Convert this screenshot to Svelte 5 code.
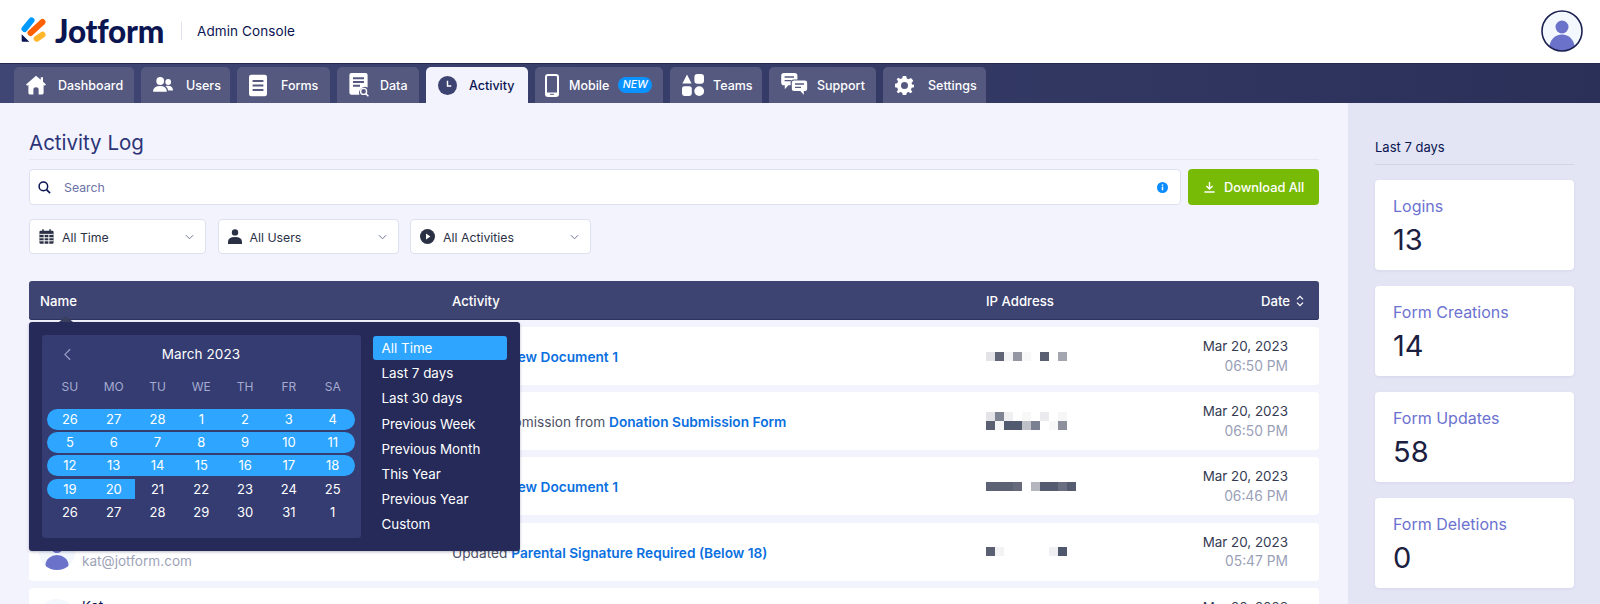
<script>
  const tabs = [
    { id: 'home', label: 'Dashboard' },
    { id: 'users', label: 'Users' },
    { id: 'forms', label: 'Forms' },
    { id: 'data', label: 'Data' },
    { id: 'activity', label: 'Activity', active: true },
    { id: 'mobile', label: 'Mobile', badge: 'NEW' },
    { id: 'teams', label: 'Teams' },
    { id: 'support', label: 'Support' },
    { id: 'settings', label: 'Settings' }
  ];
  const L = '#f3f3f6';
  const W = '#ffffff';
  const D = '#5a6072';
  const ipRows = [
    [['#e4e4e8', '#5f6577', '#f3f3f5', '#9496a2', '#f8f8f9', W, '#5a6072', W, '#a4a6b0']],
    [
      ['#e4e4e8', '#7f8494', '#f0f0f2', W, '#f8f8f9', W, '#ebebed', W, '#f6f6f7'],
      [D, '#f6f6f7', '#525a70', '#525a70', '#bfc1c8', '#7a8092', W, '#f8f8f9', '#8c8f9c']
    ],
    [['#5d6275', '#5d6275', '#5d6275', '#666a7a', W, '#b5b6be', '#565c70', '#565c70', '#6a6e80', '#565c70']],
    [[D, L, W, W, W, W, W, '#f0f0f2', '#50586e']]
  ];
  const rows = [
    { email: 'kat@jotform.com', name: 'Kat', pre: 'Created ', link: 'New Document 1', date: 'Mar 20, 2023', time: '06:50 PM', ip: ipRows[0] },
    { email: 'kat@jotform.com', name: 'Kat', pre: 'Edited Submission from ', link: 'Donation Submission Form', date: 'Mar 20, 2023', time: '06:50 PM', ip: ipRows[1] },
    { email: 'kat@jotform.com', name: 'Kat', pre: 'Created ', link: 'New Document 1', date: 'Mar 20, 2023', time: '06:46 PM', ip: ipRows[2] },
    { email: 'kat@jotform.com', name: 'Kat', pre: 'Updated ', link: 'Parental Signature Required (Below 18)', date: 'Mar 20, 2023', time: '05:47 PM', ip: ipRows[3] },
    { email: 'kat@jotform.com', name: 'Kat', pre: 'Updated ', link: 'Parental Signature', date: 'Mar 20, 2023', time: '05:40 PM', ip: [] }
  ];
  const weekdays = ['SU', 'MO', 'TU', 'WE', 'TH', 'FR', 'SA'];
  const weeks = [
    { days: [26, 27, 28, 1, 2, 3, 4], hl: 'full' },
    { days: [5, 6, 7, 8, 9, 10, 11], hl: 'full' },
    { days: [12, 13, 14, 15, 16, 17, 18], hl: 'full' },
    { days: [19, 20, 21, 22, 23, 24, 25], hl: 'part' },
    { days: [26, 27, 28, 29, 30, 31, 1], hl: 'none' }
  ];
  const presets = ['All Time', 'Last 7 days', 'Last 30 days', 'Previous Week', 'Previous Month', 'This Year', 'Previous Year', 'Custom'];
  const stats = [
    { label: 'Logins', value: '13' },
    { label: 'Form Creations', value: '14' },
    { label: 'Form Updates', value: '58' },
    { label: 'Form Deletions', value: '0' }
  ];
</script>

<div class="page">
  <header class="top">
    <svg class="logo" viewBox="0 0 25 25" width="25" height="25" aria-hidden="true">
      <path d="M3.5 12 L10.5 3.4" stroke="#0099ff" stroke-width="6" stroke-linecap="round" fill="none" />
      <path d="M9.5 16 L21.5 5" stroke="#ff6100" stroke-width="6" stroke-linecap="round" fill="none" />
      <path d="M15.7 21.7 L21.5 17.7" stroke="#ffb629" stroke-width="6" stroke-linecap="round" fill="none" />
      <path d="M.7 17.3 V23.7 Q.7 24.7 1.7 24.7 H8.3 Z" fill="#0a1551" />
    </svg>
    <span class="brand">Jotform</span>
    <span class="divider"></span>
    <span class="console">Admin Console</span>
    <span class="spacer"></span>
    <svg class="avatar-top" viewBox="0 0 42 42" width="42" height="42" aria-hidden="true">
      <defs><clipPath id="topclip"><circle cx="21" cy="21" r="20" /></clipPath></defs>
      <circle cx="21" cy="21" r="20" fill="#f3f8ff" />
      <g clip-path="url(#topclip)">
        <circle cx="21" cy="17" r="6.5" fill="#6b72c9" />
        <ellipse cx="21" cy="37" rx="12.5" ry="12.5" fill="#6b72c9" />
      </g>
      <circle cx="21" cy="21" r="20" fill="none" stroke="#1a2050" stroke-width="1.6" />
    </svg>
  </header>

  <nav class="nav">
    {#each tabs as t}
      <div class="tab t-{t.id}" class:active={t.active}>
        <span class="ticon">
          {#if t.id === 'home'}
            <svg viewBox="0 0 20 20" width="20" height="20"><path d="M10 .8 L14.8 4.8 V2.2 H17 V6.7 L20 9.4 L18.8 10.8 L17.6 9.9 V18 Q17.6 19.4 16.2 19.4 H12.6 V14.6 Q12.6 12.2 10 12.2 Q7.4 12.2 7.4 14.6 V19.4 H3.8 Q2.4 19.4 2.4 18 V9.9 L1.2 10.8 L0 9.4 Z" fill="#fff" /></svg>
          {:else if t.id === 'users'}
            <svg viewBox="0 0 20 20" width="20" height="20"><circle cx="7.2" cy="6" r="3.9" fill="#fff" /><path d="M0 16.8 Q0 11 7.2 11 Q13.6 11 13.9 16.8 Z" fill="#fff" /><circle cx="15.2" cy="7" r="2.9" fill="#fff" /><path d="M12.4 10.9 Q20 9.6 20 15.6 H15.2 Q15 12.8 12.4 10.9 Z" fill="#fff" /></svg>
          {:else if t.id === 'forms'}
            <svg viewBox="0 0 20 24" width="18" height="23"><rect x="0" y="0" width="20" height="24" rx="2.6" fill="#fff" /><path d="M4 7 H16 M4 12 H16 M4 17 H16" stroke="#55597f" stroke-width="2.2" /></svg>
          {:else if t.id === 'data'}
            <svg viewBox="0 0 20 24" width="20" height="24"><path d="M2.4 0 H16.6 Q18.6 0 18.6 2 V14.4 A6 6 0 0 0 10.4 21.8 H2.4 Q.4 21.8 .4 19.8 V2 Q.4 0 2.4 0 Z" fill="#fff" /><path d="M4 5.2 H15 M4 9 H15 M4 12.8 H11" stroke="#55597f" stroke-width="1.9" /><circle cx="14.6" cy="18.4" r="3" fill="none" stroke="#fff" stroke-width="1.4" /><path d="M16.8 20.6 L19.4 23.2" stroke="#fff" stroke-width="1.5" /></svg>
          {:else if t.id === 'activity'}
            <svg viewBox="0 0 20 20" width="19" height="19"><circle cx="10" cy="10" r="10" fill="#3e4472" /><path d="M10 5 V10.6 H14" stroke="#fff" stroke-width="1.5" fill="none" /></svg>
          {:else if t.id === 'mobile'}
            <svg viewBox="0 0 14 23" width="14" height="23"><rect x="1" y="1" width="12" height="21" rx="2" fill="#55597f" stroke="#fff" stroke-width="2" /><path d="M1 18.6 H13 V20 Q13 22 11 22 H3 Q1 22 1 20 Z" fill="#fff" /><path d="M5 20.3 H9" stroke="#55597f" stroke-width="1" /></svg>
          {:else if t.id === 'teams'}
            <svg viewBox="0 0 22 22" width="22" height="22"><path d="M5 .4 L9.6 9.4 H.4 Z" fill="#fff" /><rect x="12.4" y="0" width="9.6" height="9.8" rx="3" fill="#fff" /><rect x="0" y="12.2" width="9.8" height="9.8" rx="2.4" fill="#fff" /><circle cx="17.2" cy="17.1" r="4.9" fill="#fff" /></svg>
          {:else if t.id === 'support'}
            <svg viewBox="0 0 27 24" width="27" height="24"><path d="M3 0 H13.6 Q16.4 0 16.4 2.8 V9.4 Q16.4 12.2 13.6 12.2 H7.4 L3.8 16.2 V12.2 H3 Q0.2 12.2 0.2 9.4 V2.8 Q0.2 0 3 0 Z" fill="#fff" /><path d="M3.6 4 H13 M3.6 7.6 H10" stroke="#55597f" stroke-width="1.4" /><path d="M13 7 H24 Q26.8 7 26.8 9.8 V15.8 Q26.8 18.6 24 18.6 H23.4 V23.4 L19 18.6 H13 Q10.2 18.6 10.2 15.8 V9.8 Q10.2 7 13 7 Z" fill="#fff" stroke="#55597f" stroke-width="1.2" /><path d="M14 11 H23 M14 14.4 H20" stroke="#55597f" stroke-width="1.4" /></svg>
          {:else}
            <svg viewBox="0 0 20 20" width="19" height="19"><path fill="#fff" fill-rule="evenodd" d="M8.2 0 H11.8 L12.4 2.7 L14.4 3.5 L16.7 2 L18 3.3 L19.3 5.3 L17.4 7.2 L18 9 L20 9.2 V11.8 L17.6 12.4 L16.8 14.4 L18.2 16.6 L16.4 18.2 L14.2 16.8 L12.4 17.6 L11.8 20 H8.2 L7.6 17.6 L5.6 16.8 L3.4 18.2 L1.8 16.6 L3.2 14.4 L2.4 12.4 L0 11.8 V8.2 L2.4 7.6 L3.2 5.6 L1.8 3.4 L3.4 1.8 L5.6 3.2 L7.6 2.4 Z M10 6.3 A3.7 3.7 0 1 0 10 13.7 A3.7 3.7 0 1 0 10 6.3 Z" /></svg>
          {/if}
        </span>
        <span class="tlabel">{t.label}</span>
        {#if t.badge}<span class="badge">{t.badge}</span>{/if}
      </div>
    {/each}
  </nav>

  <div class="body">
    <main class="main">
      <h1 class="title">Activity Log</h1>
      <div class="searchline">
        <div class="search">
          <svg viewBox="0 0 14 14" width="13" height="13"><circle cx="5.8" cy="5.8" r="4.6" fill="none" stroke="#0a1551" stroke-width="1.6" /><path d="M9.2 9.2 L13 13" stroke="#0a1551" stroke-width="1.8" /></svg>
          <span class="placeholder">Search</span>
          <span class="spacer"></span>
          <svg viewBox="0 0 12 12" width="11" height="11"><circle cx="6" cy="6" r="6" fill="#0a8cff" /><rect x="5.2" y="5" width="1.6" height="4" fill="#fff" /><rect x="5.2" y="2.6" width="1.6" height="1.5" fill="#fff" /></svg>
        </div>
        <button class="download">
          <svg viewBox="0 0 11 11" width="11" height="11"><path d="M5.5 0 V6.6 M2.4 4 L5.5 7 L8.6 4 M.4 10 H10.6" fill="none" stroke="#fff" stroke-width="1.4" /></svg>
          <span>Download All</span>
        </button>
      </div>

      <div class="filters">
        <div class="filter f1">
          <svg viewBox="0 0 14 14" width="15" height="15"><path fill="#2b3145" d="M1.5 1.6 H3 V.3 H4.4 V1.6 H9.6 V.3 H11 V1.6 H12.5 Q13.6 1.6 13.6 2.7 V12.7 Q13.6 13.8 12.5 13.8 H1.5 Q.4 13.8 .4 12.7 V2.7 Q.4 1.6 1.5 1.6 Z" /><path stroke="#fff" stroke-width=".9" d="M.4 5 H13.6 M.4 8.2 H13.6 M.4 11 H13.6 M4.8 5 V14 M9.2 5 V14" /></svg>
          <span>All Time</span><span class="spacer"></span>
          <svg class="chev" viewBox="0 0 10 6" width="9" height="6"><path d="M1 1 L5 5 L9 1" fill="none" stroke="#6b7193" stroke-width="1.1" /></svg>
        </div>
        <div class="filter f2">
          <svg viewBox="0 0 14 15" width="14" height="15"><circle cx="7" cy="3.4" r="3.2" fill="#2b3145" /><path d="M0 15 V13 Q0 8 7 8 Q14 8 14 13 V15 Z" fill="#2b3145" /></svg>
          <span>All Users</span><span class="spacer"></span>
          <svg class="chev" viewBox="0 0 10 6" width="9" height="6"><path d="M1 1 L5 5 L9 1" fill="none" stroke="#6b7193" stroke-width="1.1" /></svg>
        </div>
        <div class="filter f2">
          <svg viewBox="0 0 15 15" width="15" height="15"><circle cx="7.5" cy="7.5" r="7.5" fill="#2b3145" /><path d="M6 4.6 L10.4 7.5 L6 10.4 Z" fill="#fff" /></svg>
          <span>All Activities</span><span class="spacer"></span>
          <svg class="chev" viewBox="0 0 10 6" width="9" height="6"><path d="M1 1 L5 5 L9 1" fill="none" stroke="#6b7193" stroke-width="1.1" /></svg>
        </div>
      </div>

      <div class="thead">
        <span class="c-name">Name</span>
        <span class="c-act">Activity</span>
        <span class="c-ip">IP Address</span>
        <span class="hdate">Date
          <svg viewBox="0 0 8 12" width="8" height="12"><path d="M1 4.4 L4 1.4 L7 4.4 M1 7.6 L4 10.6 L7 7.6" fill="none" stroke="#fff" stroke-width="1.3" /></svg>
        </span>

        <div class="popup">
          <span class="arrow"></span>
          <div class="cal">
            <div class="calhead">
              <svg viewBox="0 0 8 14" width="7" height="13"><path d="M7 1 L1 7 L7 13" fill="none" stroke="#9aa0c8" stroke-width="1.3" /></svg>
              <span>March 2023</span>
            </div>
            <div class="wk wd">
              {#each weekdays as d}<span>{d}</span>{/each}
            </div>
            <div class="weeks">
              {#each weeks as w}
                <div class="wk {w.hl}">
                  {#each w.days as d}<span>{d}</span>{/each}
                </div>
              {/each}
            </div>
          </div>
          <ul class="presets">
            {#each presets as p, i}
              <li class:on={i === 0}>{p}</li>
            {/each}
          </ul>
        </div>
      </div>

      <div class="rows">
        {#each rows as r}
          <div class="row">
            <div class="c-name who">
              <svg viewBox="0 0 36 36" width="36" height="36">
                <defs><clipPath id="rowclip"><circle cx="18" cy="18" r="18" /></clipPath></defs>
                <circle cx="18" cy="18" r="18" fill="#f3f8ff" />
                <g clip-path="url(#rowclip)">
                  <circle cx="18" cy="13.5" r="5.5" fill="#6b72c9" />
                  <ellipse cx="18" cy="31" rx="11.5" ry="10" fill="#6b72c9" />
                </g>
              </svg>
              <div class="whotext">
                <span class="nm">{r.name}</span>
                <span class="em">{r.email}</span>
              </div>
            </div>
            <div class="c-act act">{r.pre}<a href="#top">{r.link}</a></div>
            <div class="c-ip ip">
              {#each r.ip as line}
                <div class="ipline">
                  {#each line as c}<i style:background={c}></i>{/each}
                </div>
              {/each}
            </div>
            <div class="c-date when">
              <span>{r.date}</span>
              <span class="tm">{r.time}</span>
            </div>
          </div>
        {/each}
      </div>
    </main>

    <aside class="side">
      <div class="sidehead">Last 7 days</div>
      {#each stats as s}
        <div class="card">
          <div class="cl">{s.label}</div>
          <div class="cv">{s.value}</div>
        </div>
      {/each}
    </aside>
  </div>
</div>

<style>
  :global(body) {
    margin: 0;
    background: #fff;
  }
  .page {
    width: 1600px;
    height: 604px;
    overflow: hidden;
    font-family: Inter, "Liberation Sans", sans-serif;
    color: #0a1551;
  }
  .spacer { flex: 1; }
  .top {
    height: 63px;
    box-sizing: border-box;
    display: flex;
    align-items: center;
    padding: 0 17px 1px 21px;
    background: #fff;
  }
  .logo { margin-right: 9px; margin-top: -4px; }
  .brand {
    font-family: Lato, sans-serif;
    font-size: 31.5px;
    font-weight: 900;
    letter-spacing: -0.2px;
    color: #0a1551;
    width: 126px;
    line-height: 36px;
  }
  .divider { width: 1px; height: 18px; background: #dfe1ee; margin-right: 15px; }
  .console { font-size: 13.5px; color: #0a1551; letter-spacing: 0.1px; }
  .nav {
    height: 40px;
    box-sizing: border-box;
    border-top: 1px solid #23284f;
    padding: 3px 0 0 14px;
    display: flex;
    gap: 7px;
    align-items: flex-end;
    background: linear-gradient(90deg, #3f4674, #2a3058);
  }
  .tab {
    height: 36px;
    box-sizing: border-box;
    display: flex;
    align-items: center;
    padding-left: 12px;
    background: #55597f;
    color: #fff;
    border-radius: 5px 5px 0 0;
    font-size: 12.5px;
    font-weight: 500;
  }
  .tab.active { background: #f3f3fe; color: #0a1551; }
  .ticon { display: flex; margin-right: 12px; }
  .t-home { width: 120px; }
  .t-users { width: 89px; }
  .t-users .ticon { margin-right: 13px; }
  .t-forms { width: 93px; }
  .t-forms .ticon { margin-right: 14px; }
  .t-data { width: 82px; }
  .t-data .ticon { margin-right: 11px; }
  .t-activity { width: 102px; }
  .t-mobile { width: 128px; padding-left: 10px; }
  .t-mobile .ticon { margin-right: 10px; }
  .t-teams { width: 92px; }
  .t-teams .ticon { margin-right: 9px; }
  .t-support { width: 107px; }
  .t-support .ticon { margin-right: 9px; }
  .t-settings { width: 103px; }
  .t-settings .ticon { margin-right: 14px; }
  .badge {
    margin-left: 9px;
    background: #0a93ff;
    color: #fff;
    border-radius: 9px;
    padding: 0 4.5px;
    height: 16px;
    line-height: 16px;
    font-size: 10.5px;
    font-weight: 500;
    font-style: italic;
  }
  .body { display: flex; height: 501px; }
  .main {
    width: 1348px;
    box-sizing: border-box;
    padding: 0 29px;
    background: #f3f3fe;
    flex: none;
  }
  .title {
    margin: 0;
    height: 57px;
    box-sizing: border-box;
    border-bottom: 1px solid #e6e7f3;
    padding-top: 26px;
    line-height: 28px;
    font-size: 20.5px;
    font-weight: 400;
    color: #2c3477;
  }
  .searchline { display: flex; gap: 7px; margin-top: 9px; }
  .search {
    flex: 1;
    height: 36px;
    box-sizing: border-box;
    background: #fff;
    border: 1px solid #dfe0ef;
    border-radius: 4px;
    display: flex;
    align-items: center;
    padding: 0 12px 0 8px;
  }
  .placeholder { margin-left: 13px; font-size: 12.3px; color: #6b72a5; padding-top: 1px; }
  .download {
    width: 131px;
    height: 36px;
    border: none;
    border-radius: 4px;
    background: #78bb07;
    color: #fff;
    font: inherit;
    font-size: 12.8px;
    font-weight: 500;
    display: flex;
    align-items: center;
    padding: 0 0 0 16px;
    gap: 9px;
  }
  .filters { display: flex; gap: 11.5px; margin-top: 14px; }
  .filter {
    width: 181px;
    height: 35px;
    box-sizing: border-box;
    background: #fff;
    border: 1px solid #dfe0ef;
    border-radius: 4px;
    display: flex;
    align-items: center;
    padding: 0 11px 0 9px;
    gap: 8px;
    font-size: 12.3px;
    color: #2b3145;
  }
  .filter span:not(.spacer) { padding-top: 1px; }
  .filter.f1 { width: 177px; }
  .thead {
    position: relative;
    margin-top: 27px;
    height: 39px;
    box-sizing: border-box;
    background: #3e4472;
    border-radius: 3px;
    color: #fff;
    font-size: 13.2px;
    font-weight: 500;
    display: flex;
    align-items: center;
    box-shadow: inset 0 -1px 0 #2e3360;
  }
  .c-name { width: 423px; padding-left: 11px; flex: none; box-sizing: border-box; }
  .c-act { width: 534px; flex: none; }
  .c-ip { width: 200px; flex: none; }
  .c-date { width: 102px; flex: none; }
  .hdate {
    flex: 1;
    display: flex;
    justify-content: flex-end;
    align-items: center;
    gap: 6px;
    padding-right: 15px;
  }
  .popup {
    position: absolute;
    left: 0;
    top: 41px;
    width: 491px;
    height: 229px;
    box-sizing: border-box;
    background: #252a59;
    border-radius: 3px;
    padding: 13px 12px 12px 13px;
    display: flex;
    gap: 12px;
    z-index: 5;
    box-shadow: 0 1px 3px rgba(20, 25, 60, 0.3);
    font-weight: 400;
  }
  .arrow {
    position: absolute;
    left: 30px;
    top: -6px;
    width: 14px;
    height: 6px;
    background: #3a3f5f;
    clip-path: polygon(50% 0, 100% 100%, 0 100%);
  }
  .cal {
    width: 319px;
    height: 203px;
    flex: none;
    box-sizing: border-box;
    background: #343c72;
    border-radius: 3px;
    padding: 0 6px 0 5px;
    position: relative;
  }
  .calhead {
    height: 38px;
    display: flex;
    align-items: center;
    justify-content: center;
    font-size: 13.5px;
    letter-spacing: 0.1px;
  }
  .calhead svg { position: absolute; left: 22px; top: 13px; }
  .wk {
    display: grid;
    grid-template-columns: repeat(7, 43.8px);
    height: 20.7px;
    padding-left: 1px;
    align-items: center;
    justify-items: center;
    font-size: 13px;
    border-radius: 11px;
  }
  .wk span { width: 100%; text-align: center; line-height: 20.7px; }
  .wd { color: #a6abd0; font-size: 12px; margin-top: 4px; height: 20px; }
  .weeks {
    display: flex;
    flex-direction: column;
    gap: 2.5px;
    margin-top: 12px;
  }
  .wk.full { background: #2ea6ff; }
  .wk.part {
    background: linear-gradient(90deg, #2ea6ff 88px, transparent 88px);
    border-radius: 11px 0 0 11px;
  }
  .presets {
    list-style: none;
    margin: 1px 0 0;
    padding: 0;
    width: 134px;
    font-size: 13.4px;
    color: #fff;
  }
  .presets li {
    height: 25.2px;
    line-height: 25.2px;
    padding-left: 8.5px;
    border-radius: 3px;
  }
  .presets li.on { background: #2ea6ff; height: 24px; line-height: 24px; margin-bottom: 1.2px; }
  .rows { display: flex; flex-direction: column; gap: 7.2px; margin-top: 7px; }
  .row {
    height: 58px;
    flex: none;
    background: #fff;
    border-radius: 4px;
    display: flex;
    align-items: center;
  }
  .who { display: flex; align-items: center; gap: 7px; padding-left: 10px; }
  .whotext { display: flex; flex-direction: column; gap: 3px; }
  .nm { font-size: 13.5px; color: #0a1551; line-height: 17px; }
  .em { font-size: 13.6px; color: #9ea3b8; line-height: 17px; }
  .act { font-size: 13.7px; color: #4c5164; padding-top: 2px; }
  .act a { color: #0a6fe0; font-weight: 600; text-decoration: none; }
  .ip { display: flex; flex-direction: column; }
  .ipline { display: flex; }
  .ipline i { width: 9px; height: 9px; display: block; }
  .when {
    display: flex;
    flex-direction: column;
    align-items: flex-end;
    gap: 2px;
    font-size: 13.4px;
    line-height: 17.5px;
    color: #343a52;
    padding-top: 1px;
  }
  .tm { color: #9a9fb8; font-size: 13.8px; }
  .side {
    width: 252px;
    flex: none;
    box-sizing: border-box;
    padding: 0 26px 0 27px;
    background: #e3e5f5;
  }
  .sidehead {
    height: 62px;
    box-sizing: border-box;
    border-bottom: 1.5px solid #d2d4e8;
    padding-top: 35px;
    line-height: 18px;
    font-size: 13px;
    color: #0a1551;
    margin-bottom: 15px;
  }
  .card {
    height: 90px;
    box-sizing: border-box;
    background: #fff;
    border-radius: 4px;
    margin-bottom: 16px;
    padding: 15px 18px 0;
    box-shadow: 0 1px 3px rgba(60, 70, 130, 0.08);
  }
  .cl { font-size: 16px; line-height: 22px; color: #6b72d0; }
  .cv { font-size: 29px; line-height: 36px; margin-top: 5px; color: #1b2040; }
</style>
